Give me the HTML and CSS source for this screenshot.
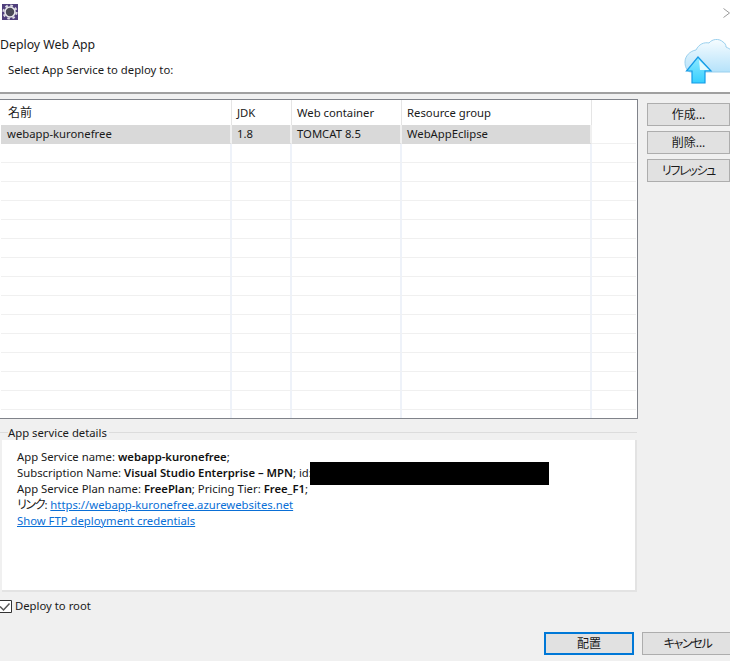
FILE: index.html
```html
<!DOCTYPE html>
<html lang="ja">
<head>
<meta charset="utf-8">
<title>Deploy Web App</title>
<link rel="stylesheet" href="styles.css">
</head>
<body>
<div class="dialog">
  <header class="top">
    <div class="titlebar">
      <svg class="app-icon" width="16" height="16" viewBox="0 0 16 16"><rect width="16" height="16" fill="#4f3f7c"/><circle cx="8" cy="8" r="6.6" fill="none" stroke="#dcdbe2" stroke-width="2" stroke-dasharray="2.6 2.6"/><circle cx="8" cy="8" r="5" fill="#4a4a58" stroke="#e8e8ec" stroke-width="1.6"/></svg>
      <svg class="close" width="7" height="10" viewBox="0 0 7 10"><path d="M0.5 0.5L6.5 5L0.5 9.5" fill="none" stroke="#9a9a9a"/></svg>
    </div>
    <div class="banner">
      <div class="banner-text">
        <h1 class="title">Deploy Web App</h1>
        <p class="subtitle">Select App Service to deploy to:</p>
      </div>
      <svg class="cloud" width="46" height="48" viewBox="0 0 46 48">
        <defs>
          <linearGradient id="cl" x1="0" y1="0" x2="0" y2="1"><stop offset="0" stop-color="#f6fcff"/><stop offset="1" stop-color="#b5e2fa"/></linearGradient>
          <linearGradient id="ar" x1="0" y1="0" x2="0" y2="1"><stop offset="0" stop-color="#8fe9ff"/><stop offset="1" stop-color="#35cfff"/></linearGradient>
        </defs>
        <path d="M6 36C2 34 1 30 1 26C1 20 6 15 12 14C15 8 20 6 25 7C28 3 35 2 39 6C41 7 42 9 42 11C44 12 46 13 47 14V36Z" fill="url(#cl)" stroke="#9ad0ee"/>
        <path d="M14 21L27 35H21V47H8V35H2.500Z" fill="url(#ar)" stroke="#159ae6" stroke-width="1.200"/>
        <path d="M15 24L25 34H16Z" fill="#e4faff"/>
      </svg>
    </div>
  </header>
  <main class="body">
    <div class="upper">
      <div class="table-box">
        <table class="grid">
          <colgroup><col class="c1"><col class="c2"><col class="c3"><col class="c4"><col></colgroup>
          <thead>
            <tr><th><span class="ja">名前</span></th><th>JDK</th><th>Web container</th><th>Resource group</th><th></th></tr>
          </thead>
          <tbody>
            <tr class="selected"><td>webapp-kuronefree</td><td>1.8</td><td>TOMCAT 8.5</td><td>WebAppEclipse</td><td class="rest"></td></tr>
            <tr><td></td><td></td><td></td><td></td><td></td></tr>
            <tr><td></td><td></td><td></td><td></td><td></td></tr>
            <tr><td></td><td></td><td></td><td></td><td></td></tr>
            <tr><td></td><td></td><td></td><td></td><td></td></tr>
            <tr><td></td><td></td><td></td><td></td><td></td></tr>
            <tr><td></td><td></td><td></td><td></td><td></td></tr>
            <tr><td></td><td></td><td></td><td></td><td></td></tr>
            <tr><td></td><td></td><td></td><td></td><td></td></tr>
            <tr><td></td><td></td><td></td><td></td><td></td></tr>
            <tr><td></td><td></td><td></td><td></td><td></td></tr>
            <tr><td></td><td></td><td></td><td></td><td></td></tr>
            <tr><td></td><td></td><td></td><td></td><td></td></tr>
            <tr><td></td><td></td><td></td><td></td><td></td></tr>
            <tr><td></td><td></td><td></td><td></td><td></td></tr>
            <tr class="tail"><td></td><td></td><td></td><td></td><td></td></tr>
          </tbody>
        </table>
      </div>
      <div class="side">
        <button class="btn ja">作成...</button>
        <button class="btn ja">削除...</button>
        <button class="btn ja tight">リフレッシュ</button>
      </div>
    </div>
    <section class="group">
      <div class="legend"><span class="legend-text">App service details</span></div>
      <div class="details">
        <p>App Service name: <b>webapp-kuronefree</b>;</p>
        <p>Subscription Name: <b>Visual Studio Enterprise – MPN</b>; id:</p>
        <p>App Service Plan name: <b>FreePlan</b>; Pricing Tier: <b>Free_F1</b>;</p>
        <p><span class="ja tight">リンク</span>: <a href="#">https://webapp-kuronefree.azurewebsites.net</a></p>
        <p><a href="#">Show FTP deployment credentials</a></p>
        <div class="redact"></div>
      </div>
    </section>
    <label class="check">
      <svg width="12" height="13" viewBox="0 0 12 13"><path d="M0 0.5H11.500V12.500H0" fill="#fff" stroke="#333"/><path d="M0 6.500L3.500 10L9.500 3.500" fill="none" stroke="#555" stroke-width="1.500"/></svg>
      <span>Deploy to root</span>
    </label>
    <div class="actions">
      <button class="btn primary ja">配置</button>
      <button class="btn cancel ja tight">キャンセル</button>
    </div>
  </main>
</div>
</body>
</html>
```
FILE: styles.css
```css
html, body { margin: 0; padding: 0; }
body {
  width: 730px;
  height: 661px;
  overflow: hidden;
  background: #f0f0f0;
  color: #1a1a1a;
  font-family: "Noto Sans", "Noto Sans CJK JP", sans-serif;
  font-size: 11.3px;
  line-height: 16px;
}
.ja { font-size: 12px; font-feature-settings: "palt"; }
.tight { letter-spacing: -1.3px; }
.dialog { width: 730px; height: 661px; display: flex; flex-direction: column; }
.top { background: #fff; height: 92px; border-bottom: 2px solid #a0a0a0; flex: none; }
.titlebar { height: 32px; display: flex; justify-content: space-between; align-items: flex-start; padding-top: 4px; box-sizing: border-box; }
.app-icon { margin-left: 2px; }
.close { margin-top: 4px; }
.banner { display: flex; justify-content: space-between; height: 60px; }
.banner-text { padding-top: 5px; }
.title { margin: 0; font-size: 12.3px; font-weight: 400; line-height: 16px; }
.subtitle { margin: 9px 0 0 8px; }
.cloud { margin-top: 4px; }
.body { flex: 1; display: flex; flex-direction: column; min-height: 0; }
.upper { display: flex; padding-top: 5px; height: 320px; }
.table-box { width: 636px; height: 318px; background: #fff; border: 1px solid #80838a; border-left: 0; margin-right: 9px; overflow: hidden; flex: none; padding-left: 1px; }
.grid { border-collapse: separate; border-spacing: 0; table-layout: fixed; width: 635px; }
.c1 { width: 231px; }
.c2 { width: 60px; }
.c3 { width: 110px; }
.c4 { width: 190px; }
th { height: 25px; padding: 0 0 0 5px; box-sizing: border-box; font-weight: 400; text-align: left; border-right: 1px solid #e5e5e5; white-space: nowrap; background: #fff; }
th:first-child { padding-left: 7px; }
th:last-child { border-right: 0; }
td { height: 19px; padding: 0 0 0 5px; box-sizing: border-box; border-right: 2px solid #eef2f9; border-bottom: 1px solid #f0f0f0; white-space: nowrap; }
td:first-child { padding-left: 6px; }
td:last-child { border-right: 0; }
.selected td { background: #d9d9d9; border-bottom-color: #d9d9d9; border-right-color: #f0f0f0; }
.selected td.rest { background: #fff; border-bottom-color: #f0f0f0; }
.tail td { height: 8px; border-bottom: 0; }
.side { display: flex; flex-direction: column; gap: 5px; margin-top: 4px; }
.btn { width: 83px; height: 23px; padding: 0; background: #e1e1e1; border: 1px solid #adadad; color: #1a1a1a; font-family: inherit; line-height: 20px; }
.group { height: 172px; padding-left: 2px; flex: none; }
.legend { height: 21px; margin-left: -2px; width: 637px; padding-left: 8px; box-sizing: border-box; display: flex; align-items: flex-end; background: linear-gradient(#dcdcdc, #dcdcdc) 0 13px / 100% 1px no-repeat; }
.legend-text { background: #f0f0f0; height: 20px; line-height: 26px; padding-right: 2px; }
.details { position: relative; width: 635px; height: 152px; background: #fff; box-sizing: border-box; padding: 9px 0 0 15px; border-right: 2px solid #e3e3e3; border-bottom: 2px solid #e3e3e3; }
.details p { margin: 0; height: 16px; white-space: nowrap; }
.details b { font-weight: 600; color: #111; }
.details a { color: #0a6fd6; }
.redact { position: absolute; left: 308px; top: 22px; width: 239px; height: 23px; background: #000; }
.check { display: flex; align-items: center; gap: 3px; height: 16px; margin-top: 7px; }
.actions { display: flex; justify-content: flex-end; gap: 8px; margin-top: 18px; }
.actions .btn { width: 90px; height: 23px; box-sizing: border-box; }
.actions .primary { border: 2px solid #0078d7; }
.actions .cancel { width: 91px; margin-right: -3px; }
```
